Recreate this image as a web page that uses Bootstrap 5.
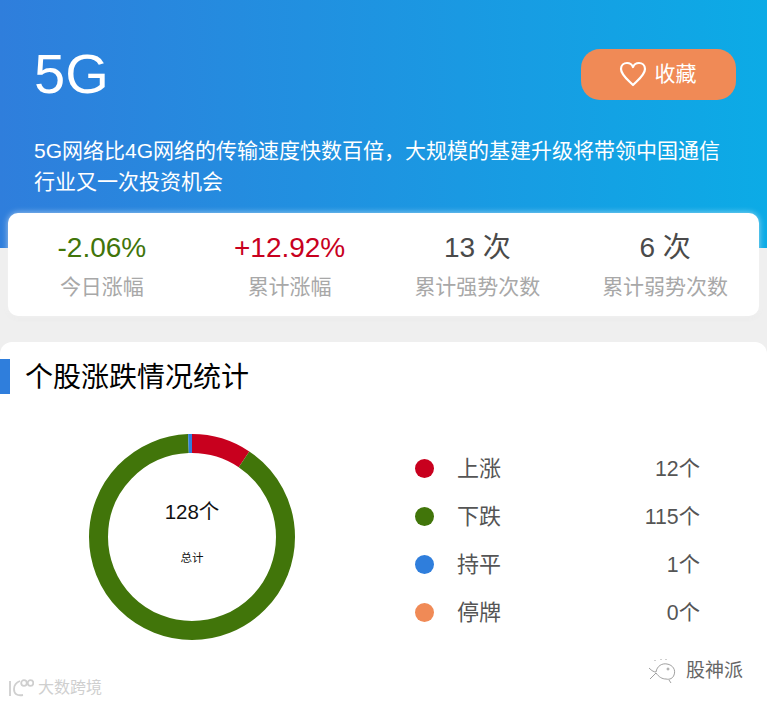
<!DOCTYPE html>
<html lang="zh-CN">
<head>
    <meta charset="UTF-8">
    <meta name="viewport" content="width=device-width, initial-scale=1.0">
    <title>5G</title>
    <link href="https://cdn.jsdelivr.net/npm/bootstrap@5.3.3/dist/css/bootstrap.min.css" rel="stylesheet">
    <style>
        body {
            background: #efefef;
            font-family: "Liberation Sans", "Noto Sans CJK SC", sans-serif;
            min-height: 703px;
            overflow: hidden;
        }
        .hero {
            height: 248px;
            padding: 49px 31px 0 34px;
            background: linear-gradient(90deg, #2f7edc, #0cabe6);
            color: #fff;
        }
        .hero-title { font-size: 56px; line-height: 49px; font-weight: 400; margin: 0; }
        .fav-btn {
            width: 155px;
            height: 51px;
            border-radius: 19px;
            background: #f08a56;
            color: #fff;
            font-size: 21px;
            border: 0;
            padding: 0 2px 2px 0;
        }
        .hero-desc { font-size: 21px; line-height: 31px; margin: 35px 0 0; }
        .stat-card {
            margin: -35px 8px 0;
            height: 103px;
            border-radius: 10px;
            background: #fff;
            box-shadow: 0 0 6px rgba(255, 255, 255, .6), 0 2px 6px rgba(0, 0, 0, .04);
            padding-top: 18px;
        }
        .stat-val { font-size: 28px; line-height: 34px; color: #4a4a4a; }
        .stat-label { font-size: 21px; line-height: 30px; margin-top: 7px; color: #a8a8a8; }
        .c-down { color: #41750a; }
        .c-up { color: #c8001e; }
        .panel {
            margin-top: 26px;
            height: 361px;
            background: #fff;
            border-radius: 12px 12px 0 0;
            padding-top: 17px;
        }
        .panel-title {
            border-left: 10px solid #2f7edc;
            height: 35px;
            padding-left: 15px;
            font-size: 28px;
            line-height: 37px;
            color: #000;
        }
        .panel-body { padding: 40px 67px 0 89px; }
        .donut-wrap { width: 206px; height: 206px; }
        .donut-center { inset: 0; color: #111; padding-bottom: 9px; }
        .donut-num { font-size: 20.5px; line-height: 24px; }
        .donut-cap { font-size: 11.5px; line-height: 16px; margin-top: 26px; }
        .legend { width: 285px; font-size: 22px; color: #555; row-gap: 18px; margin-top: 6px; }
        .legend-row { height: 30px; }
        .dot { width: 19px; height: 19px; border-radius: 50%; margin-right: 23px; }
        .legend-num { font-size: 21.3px; padding-top: 3px; }
        .mark-wx { right: 24px; bottom: 18px; font-size: 19px; color: #666; }
        .mark-dk { left: 8px; bottom: 3px; font-size: 16px; color: #cfcfcf; }
    </style>
</head>
<body>
    <div class="hero">
        <div class="d-flex justify-content-between align-items-start">
            <h1 class="hero-title">5G</h1>
            <button type="button" class="fav-btn d-flex align-items-center justify-content-center gap-2">
                <svg width="28" height="26" viewBox="0 0 28 26" fill="none" stroke="#fff" stroke-width="2.2" stroke-linejoin="round">
                    <path d="M14 24 C9 19 2 14 2 8 C2 4 5 2 8 2 C11 2 13 3.500 14 6 C15 3.500 17 2 20 2 C23 2 26 4 26 8 C26 14 19 19 14 24 Z"/>
                </svg>
                <span>收藏</span>
            </button>
        </div>
        <p class="hero-desc">5G网络比4G网络的传输速度快数百倍，大规模的基建升级将带领中国通信行业又一次投资机会</p>
    </div>

    <div class="stat-card row g-0 text-center">
        <div class="col-3">
            <div class="stat-val c-down">-2.06%</div>
            <div class="stat-label">今日涨幅</div>
        </div>
        <div class="col-3">
            <div class="stat-val c-up">+12.92%</div>
            <div class="stat-label">累计涨幅</div>
        </div>
        <div class="col-3">
            <div class="stat-val">13 次</div>
            <div class="stat-label">累计强势次数</div>
        </div>
        <div class="col-3">
            <div class="stat-val">6 次</div>
            <div class="stat-label">累计弱势次数</div>
        </div>
    </div>

    <div class="panel position-relative">
        <div class="panel-title">个股涨跌情况统计</div>
        <div class="panel-body d-flex justify-content-between align-items-center">
            <div class="donut-wrap position-relative">
                <svg id="donut" width="206" height="206" viewBox="0 0 206 206"></svg>
                <div class="donut-center position-absolute d-flex flex-column align-items-center justify-content-center">
                    <div class="donut-num">128个</div>
                    <div class="donut-cap">总计</div>
                </div>
            </div>
            <div class="legend d-flex flex-column">
                <div class="legend-row d-flex align-items-center"><span class="dot" style="background:#c8001e"></span><span class="flex-grow-1">上涨</span><span class="legend-num">12个</span></div>
                <div class="legend-row d-flex align-items-center"><span class="dot" style="background:#41750a"></span><span class="flex-grow-1">下跌</span><span class="legend-num">115个</span></div>
                <div class="legend-row d-flex align-items-center"><span class="dot" style="background:#2f7edc"></span><span class="flex-grow-1">持平</span><span class="legend-num">1个</span></div>
                <div class="legend-row d-flex align-items-center"><span class="dot" style="background:#f08a56"></span><span class="flex-grow-1">停牌</span><span class="legend-num">0个</span></div>
            </div>
        </div>

        <div class="mark-wx position-absolute d-flex align-items-center gap-2">
            <svg width="30" height="26" viewBox="0 0 30 26" fill="none" stroke="#888" stroke-width=".8">
                <path d="M1 10 C4 13 6 14 8 14 C9 8 14 5 19 6 C25 7 28 12 26 17 C25 20 22 22 18 21 C14 21 11 19 8 15 C6 17 4 19 2 21"/>
                <circle cx="20" cy="11" r="1"/>
                <path d="M21 22 L23 25 M7 2 L7 3 M13 1 L13 2 M18 1 L18 2"/>
            </svg>
            <span>股神派</span>
        </div>
        <div class="mark-dk position-absolute d-flex align-items-center gap-1">
            <svg width="26" height="20" viewBox="0 0 26 20" fill="none" stroke="#cfcfcf" stroke-width="1.8">
                <path d="M2 3 L2 18 M12 3 C7 5 6 8 6 11 C6 16 9 18 15 17"/>
                <circle cx="16" cy="5" r="2.800"/>
                <circle cx="22.500" cy="5" r="2.800"/>
            </svg>
            <span>大数跨境</span>
        </div>
    </div>

    <script>
        // 12 / 115 / 1 from the top clockwise, red first and blue last
        const segments = [
            { value: 12, color: '#c8001e' },
            { value: 115, color: '#41750a' },
            { value: 1, color: '#2f7edc' }
        ];
        const total = 128;
        const r = 93.5;
        const len = 2 * Math.PI * r;
        let offset = 0;
        let html = '';
        segments.forEach(function(s) {
            const part = s.value / total * len;
            html += '<circle cx="103" cy="103" r="' + r + '" fill="none" stroke="' + s.color + '" stroke-width="19"' +
                ' stroke-dasharray="' + part + ' ' + (len - part) + '" stroke-dashoffset="' + (-offset) + '"' +
                ' transform="rotate(-90 103 103)"></circle>';
            offset += part;
        });
        document.getElementById('donut').innerHTML = html;
    </script>
    <script src="https://cdn.jsdelivr.net/npm/bootstrap@5.3.3/dist/js/bootstrap.bundle.min.js"></script>
</body>
</html>
